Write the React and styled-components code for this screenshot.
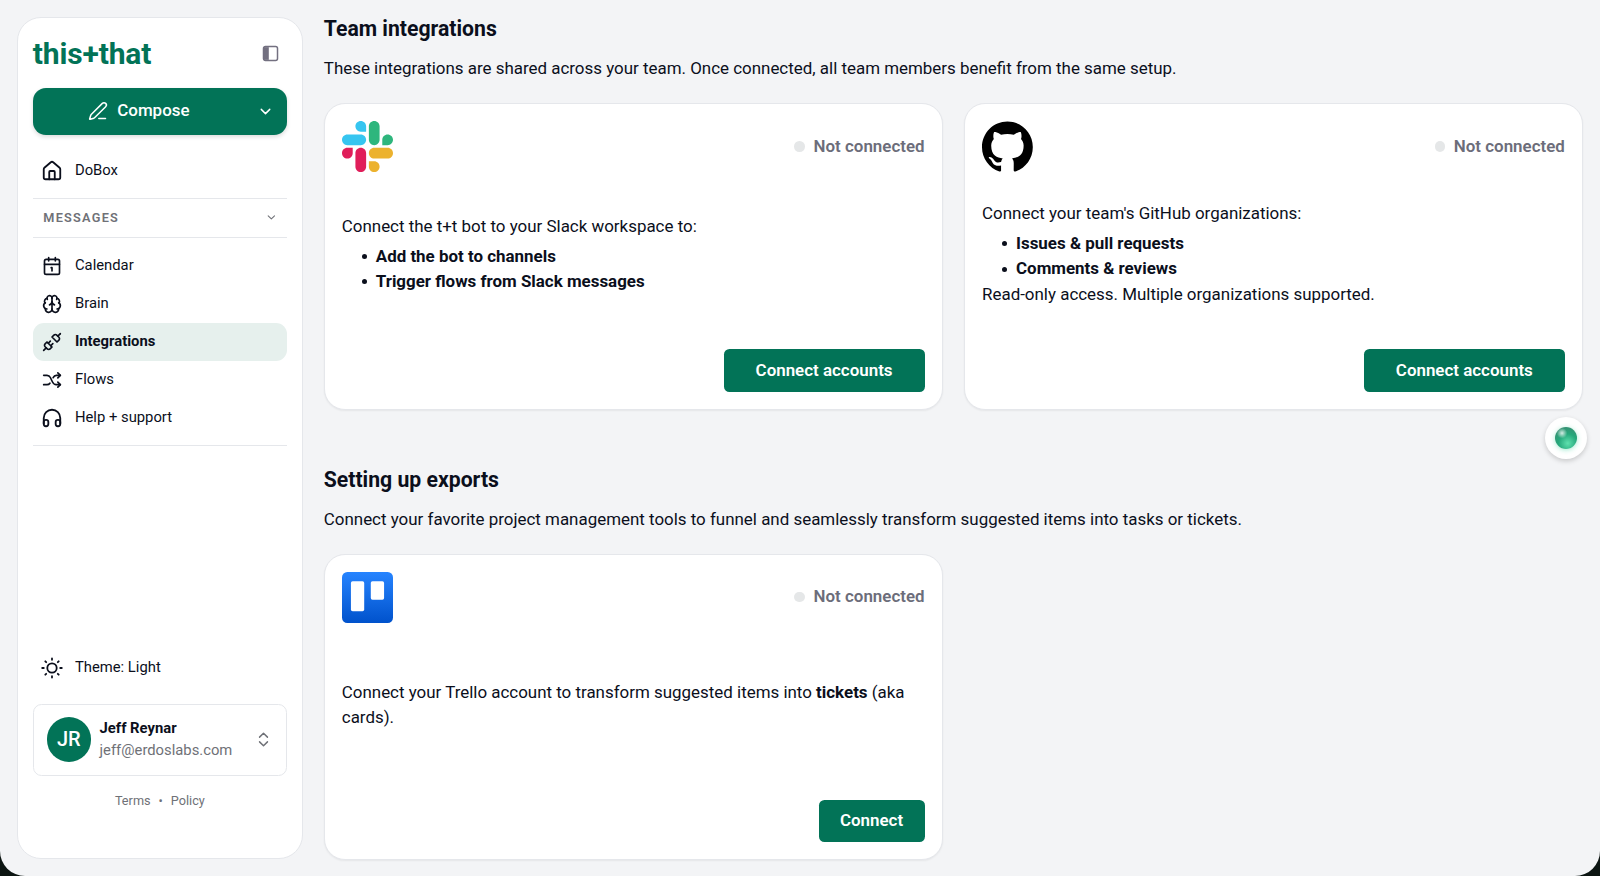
import React from "react";
import styled, { createGlobalStyle } from "styled-components";
import {
  Brain,
  Calendar1,
  ChevronDown,
  ChevronsUpDown,
  House,
  PenLine,
  Unplug
} from "lucide-react";

const GlobalStyle = createGlobalStyle`
  * {
    box-sizing: border-box;
  }
  body {
    margin: 0;
    background: #0c1512;
    color: #0b0f1c;
    font-family: Roboto, "Liberation Sans", sans-serif;
    font-size: 16.93px;
    line-height: 25.4px;
  }
  button {
    border: none;
    padding: 0;
    color: inherit;
    font: inherit;
    cursor: pointer;
  }
`;

const Shell = styled.div`
  position: relative;
  display: flex;
  gap: 20.8px;
  height: 876px;
  padding: 17px 17.2px 17.5px 17.4px;
  overflow: hidden;
  background: #f3f4f6;
  border-radius: 0 0 25px 25px;
`;

const Sidebar = styled.aside`
  display: flex;
  flex-direction: column;
  flex-shrink: 0;
  width: 285.6px;
  padding: 15px 15px 15px 14.4px;
  background: #fff;
  border: 1px solid #e5e7eb;
  border-radius: 24px;
`;

const Brand = styled.header`
  display: flex;
  align-items: center;
  justify-content: space-between;
  height: 41px;
  padding-right: 8px;
`;

const Wordmark = styled.span`
  color: #027357;
  font-size: 30px;
  font-weight: 700;
  letter-spacing: -0.15px;
`;

const ComposeButton = styled.button`
  display: flex;
  align-items: center;
  height: 47px;
  margin-top: 13.5px;
  background: #027357;
  border-radius: 13px;
  box-shadow: 0 2px 4px rgba(0, 0, 0, 0.14);
  color: #fff;
  font-weight: 500;
`;

const ComposeLabel = styled.span`
  display: flex;
  flex: 1;
  align-items: center;
  justify-content: center;
  gap: 9px;
`;

const ComposeMore = styled.span`
  display: flex;
  align-items: center;
  width: 42px;
  padding-left: 12px;
`;

const Nav = styled.nav`
  display: flex;
  flex-direction: column;
  padding: ${props => props.$padding || "0"};
  border-bottom: 1px solid #e5e7eb;
`;

const NavItem = styled.a`
  display: flex;
  align-items: center;
  gap: 11px;
  height: 38.1px;
  padding-left: 7.2px;
  background: ${props => (props.$active ? "#e6f0ed" : "transparent")};
  border-radius: 11px;
  font-size: 14.8px;
  font-weight: ${props => (props.$active ? 700 : 400)};
`;

const IconSlot = styled.span`
  display: flex;
  align-items: center;
  justify-content: center;
  width: 24px;
  height: 24px;
`;

const Group = styled.div`
  display: flex;
  align-items: center;
  justify-content: space-between;
  height: 39px;
  padding: 0 9px 0 10.5px;
  border-bottom: 1px solid #e5e7eb;
  color: #6f7177;
  font-size: 12.7px;
  font-weight: 600;
  letter-spacing: 1.27px;
`;

const Footer = styled.footer`
  display: flex;
  flex-direction: column;
  margin-top: auto;
  padding-bottom: 29px;
`;

const Account = styled.button`
  display: flex;
  align-items: center;
  gap: 8.5px;
  height: 72px;
  margin-top: 17px;
  padding: 0 13px 0 12.8px;
  background: #fff;
  border: 1px solid #e5e7eb;
  border-radius: 8.5px;
  text-align: left;
  svg {
    margin-left: auto;
    color: #6f7177;
  }
`;

const Avatar = styled.span`
  display: flex;
  align-items: center;
  justify-content: center;
  width: 44.5px;
  height: 44.5px;
  background: #027357;
  border-radius: 50%;
  color: #fff;
  font-size: 20px;
  font-weight: 500;
`;

const Person = styled.span`
  display: flex;
  flex-direction: column;
  font-size: 14.8px;
  line-height: 21.2px;
`;

const Name = styled.span`
  font-weight: 700;
`;

const Email = styled.span`
  color: #6f7177;
`;

const Legal = styled.div`
  display: flex;
  justify-content: center;
  gap: 8px;
  margin-top: 12.5px;
  color: #6f7177;
  font-size: 12.7px;
`;

const Main = styled.main`
  flex: 1;
  min-width: 0;
  margin-top: -3px;
`;

const Section = styled.section`
  height: 450.6px;
`;

const Title = styled.h2`
  margin: 0;
  font-size: 21.2px;
  font-weight: 700;
  line-height: 29.6px;
`;

const Lead = styled.p`
  margin: 12.9px 0 21.2px;
`;

const Cards = styled.div`
  display: grid;
  grid-template-columns: repeat(2, 1fr);
  gap: 21.5px;
`;

const Card = styled.article`
  display: flex;
  flex-direction: column;
  height: 306.5px;
  padding: 17px;
  background: #fff;
  border: 1px solid #e5e7eb;
  border-radius: 21px;
  box-shadow: 0 1px 2px rgba(0, 0, 0, 0.06);
`;

const CardHeader = styled.header`
  display: flex;
  align-items: center;
  justify-content: space-between;
  svg {
    width: 51px;
    height: 51px;
  }
`;

const Status = styled.span`
  display: flex;
  align-items: center;
  gap: 8.5px;
  color: #6c6d7a;
  font-weight: 600;
  &::before {
    width: 10.6px;
    height: 10.6px;
    background: #e5e7e8;
    border-radius: 50%;
    content: "";
  }
`;

const CardBody = styled.div`
  display: flex;
  flex: 1;
  flex-direction: column;
  justify-content: center;
  padding-bottom: 12.7px;
  p {
    margin: 0;
  }
`;

const Features = styled.ul`
  margin: 4.2px 0 0;
  padding-left: 19.8px;
  font-weight: 700;
  list-style: none;
`;

const Feature = styled.li`
  display: flex;
  align-items: center;
  gap: 9px;
  &::before {
    width: 5.2px;
    height: 5.2px;
    background: currentColor;
    border-radius: 50%;
    content: "";
  }
`;

const ConnectButton = styled.button`
  align-self: flex-end;
  width: ${props => (props.$wide ? "201px" : "106px")};
  height: 42.3px;
  background: #027357;
  border-radius: 5.5px;
  color: #fff;
  font-weight: 600;
`;

const Orb = styled.button`
  position: absolute;
  top: 417px;
  right: 13px;
  display: flex;
  align-items: center;
  justify-content: center;
  width: 42px;
  height: 42px;
  background: #fff;
  border-radius: 50%;
  box-shadow: 0 2px 5px rgba(0, 0, 0, 0.18);
  &::before {
    width: 22px;
    height: 22px;
    background:
      radial-gradient(circle at 32% 28%, rgba(255, 255, 255, 0.8) 0, rgba(255, 255, 255, 0) 24%),
      radial-gradient(circle at 58% 74%, #5fe0ae 0, #25a87b 45%, #3a8a70 90%);
    border-radius: 50%;
    box-shadow: 0 1px 5px rgba(52, 211, 153, 0.45);
    content: "";
  }
`;

const PanelIcon = () => (
  <svg width="17" height="17" viewBox="0 0 16 16" fill="none">
    <rect x="1.4" y="1.4" width="13.2" height="13.2" rx="1.8" stroke="#737080" strokeWidth="1.4" />
    <path d="M1.6 2h4.8v12H1.6z" fill="#737080" />
  </svg>
);

const FlowsIcon = () => (
  <svg width="20" height="20" viewBox="0 0 24 24" fill="none" stroke="currentColor" strokeWidth="2" strokeLinecap="round" strokeLinejoin="round">
    <path d="M2 6.4h4c2 0 3.2.9 4 2.6l2.6 5.4c1 2.1 2.4 3.2 4.4 3.2h5" />
    <path d="m19 3.4 3 3-3 3M19 14.6l3 3-3 3" />
    <path d="M2 17.6h4c1.6 0 2.7-.6 3.5-1.8M13.4 9.2c.9-1.9 2-2.8 3.8-2.8H22" />
  </svg>
);

const SupportIcon = () => (
  <svg width="22" height="22" viewBox="0 0 24 24" fill="none" stroke="currentColor" strokeWidth="2" strokeLinecap="round" strokeLinejoin="round">
    <path d="M3 18v-6a9 9 0 0 1 18 0v6" />
    <rect x="3" y="14" width="5" height="7" rx="2.4" />
    <rect x="16" y="14" width="5" height="7" rx="2.4" />
  </svg>
);

const SunIcon = () => (
  <svg width="24" height="24" viewBox="0 0 24 24" fill="none" stroke="currentColor" strokeWidth="1.8" strokeLinecap="round">
    <circle cx="12" cy="12" r="4.7" />
    <path d="M12 2.4v1.4M12 20.2v1.4M2.2 12h1.6M20.2 12h1.6M5.3 5.3l.9.9M17.8 17.8l.9.9M5.3 18.7l.9-.9M17.8 6.2l.9-.9" />
  </svg>
);

const SlackLogo = () => (
  <svg viewBox="0 0 122.8 122.8">
    <path fill="#e01e5a" d="M25.8 77.6c0 7.1-5.8 12.9-12.9 12.9S0 84.7 0 77.6s5.8-12.9 12.9-12.9h12.9v12.9zm6.5 0c0-7.1 5.8-12.9 12.9-12.9s12.9 5.8 12.9 12.9v32.3c0 7.1-5.8 12.9-12.9 12.9s-12.9-5.8-12.9-12.9V77.6z" />
    <path fill="#36c5f0" d="M45.2 25.8c-7.1 0-12.9-5.8-12.9-12.9S38.1 0 45.2 0s12.9 5.8 12.9 12.9v12.9H45.2zm0 6.5c7.1 0 12.9 5.8 12.9 12.9s-5.8 12.9-12.9 12.9H12.9C5.8 58.1 0 52.3 0 45.2s5.8-12.9 12.9-12.9h32.3z" />
    <path fill="#2eb67d" d="M97 45.2c0-7.1 5.8-12.9 12.9-12.9s12.9 5.8 12.9 12.9-5.8 12.9-12.9 12.9H97V45.2zm-6.5 0c0 7.1-5.8 12.9-12.9 12.9s-12.9-5.8-12.9-12.9V12.9C64.7 5.8 70.5 0 77.6 0s12.9 5.8 12.9 12.9v32.3z" />
    <path fill="#ecb22e" d="M77.6 97c7.1 0 12.9 5.8 12.9 12.9s-5.8 12.9-12.9 12.9-12.9-5.8-12.9-12.9V97h12.9zm0-6.5c-7.1 0-12.9-5.8-12.9-12.9s5.8-12.9 12.9-12.9h32.3c7.1 0 12.9 5.8 12.9 12.9s-5.8 12.9-12.9 12.9H77.6z" />
  </svg>
);

const GithubLogo = () => (
  <svg viewBox="0 0 98 96">
    <path fill="#000" fillRule="evenodd" clipRule="evenodd" d="M48.854 0C21.839 0 0 22 0 49.217c0 21.756 13.993 40.172 33.405 46.69 2.427.49 3.316-1.059 3.316-2.362 0-1.141-.08-5.052-.08-9.127-13.59 2.934-16.42-5.867-16.42-5.867-2.184-5.704-5.42-7.17-5.42-7.17-4.448-3.015.324-3.015.324-3.015 4.934.326 7.523 5.052 7.523 5.052 4.367 7.496 11.404 5.378 14.235 4.074.404-3.178 1.699-5.378 3.074-6.6-10.839-1.141-22.243-5.378-22.243-24.283 0-5.378 1.94-9.778 5.014-13.2-.485-1.222-2.184-6.275.486-13.038 0 0 4.125-1.304 13.426 5.052a46.97 46.97 0 0 1 12.214-1.63c4.125 0 8.33.571 12.213 1.63 9.302-6.356 13.427-5.052 13.427-5.052 2.67 6.763.97 11.816.485 13.038 3.155 3.422 5.015 7.822 5.015 13.2 0 18.905-11.404 23.06-22.324 24.283 1.78 1.548 3.316 4.481 3.316 9.126 0 6.6-.08 11.897-.08 13.526 0 1.304.89 2.853 3.316 2.364 19.412-6.52 33.405-24.935 33.405-46.691C97.707 22 75.788 0 48.854 0z" />
  </svg>
);

const TrelloLogo = () => (
  <svg viewBox="0 0 48 48">
    <defs>
      <linearGradient id="trello" x1="0" y1="0" x2="0" y2="1">
        <stop offset="0" stopColor="#2684ff" />
        <stop offset="1" stopColor="#0052cc" />
      </linearGradient>
    </defs>
    <rect width="48" height="48" rx="5" fill="url(#trello)" />
    <rect x="8.4" y="8.8" width="12.5" height="28.2" rx="1.6" fill="#fff" />
    <rect x="27.1" y="8.8" width="12.5" height="17.2" rx="1.6" fill="#fff" />
  </svg>
);

const links = [
  { label: "Calendar", icon: <Calendar1 size={20} /> },
  { label: "Brain", icon: <Brain size={20} /> },
  { label: "Integrations", icon: <Unplug size={20} />, active: true },
  { label: "Flows", icon: <FlowsIcon /> },
  { label: "Help + support", icon: <SupportIcon /> }
];

const IntegrationCard = ({ Logo, action, wide, children }) => (
  <Card>
    <CardHeader>
      <Logo />
      <Status>Not connected</Status>
    </CardHeader>
    <CardBody>{children}</CardBody>
    <ConnectButton $wide={wide}>{action}</ConnectButton>
  </Card>
);

export default () => (
  <>
    <GlobalStyle />
    <Shell>
      <Sidebar>
        <Brand>
          <Wordmark>this+that</Wordmark>
          <PanelIcon />
        </Brand>
        <ComposeButton>
          <ComposeLabel>
            <PenLine size={20} strokeWidth={1.8} />
            Compose
          </ComposeLabel>
          <ComposeMore>
            <ChevronDown size={17} />
          </ComposeMore>
        </ComposeButton>
        <Nav $padding="17px 0 8px">
          <NavItem>
            <IconSlot>
              <House size={22} />
            </IconSlot>
            DoBox
          </NavItem>
        </Nav>
        <Group>
          MESSAGES
          <ChevronDown size={12.7} />
        </Group>
        <Nav $padding="9.1px 0 7.9px">
          {links.map(({ label, icon, active }) => (
            <NavItem key={label} $active={active}>
              <IconSlot>{icon}</IconSlot>
              {label}
            </NavItem>
          ))}
        </Nav>
        <Footer>
          <NavItem>
            <IconSlot>
              <SunIcon />
            </IconSlot>
            Theme: Light
          </NavItem>
          <Account>
            <Avatar>JR</Avatar>
            <Person>
              <Name>Jeff Reynar</Name>
              <Email>jeff@erdoslabs.com</Email>
            </Person>
            <ChevronsUpDown size={19} strokeWidth={1.8} />
          </Account>
          <Legal>
            <span>Terms</span>
            <span>•</span>
            <span>Policy</span>
          </Legal>
        </Footer>
      </Sidebar>
      <Main>
        <Section>
          <Title>Team integrations</Title>
          <Lead>
            These integrations are shared across your team. Once connected, all team members benefit from the same setup.
          </Lead>
          <Cards>
            <IntegrationCard Logo={SlackLogo} action="Connect accounts" wide>
              <p>Connect the t+t bot to your Slack workspace to:</p>
              <Features>
                <Feature>Add the bot to channels</Feature>
                <Feature>Trigger flows from Slack messages</Feature>
              </Features>
            </IntegrationCard>
            <IntegrationCard Logo={GithubLogo} action="Connect accounts" wide>
              <p>Connect your team's GitHub organizations:</p>
              <Features>
                <Feature>Issues &amp; pull requests</Feature>
                <Feature>Comments &amp; reviews</Feature>
              </Features>
              <p>Read-only access. Multiple organizations supported.</p>
            </IntegrationCard>
          </Cards>
        </Section>
        <Section>
          <Title>Setting up exports</Title>
          <Lead>
            Connect your favorite project management tools to funnel and seamlessly transform suggested items into tasks or tickets.
          </Lead>
          <Cards>
            <IntegrationCard Logo={TrelloLogo} action="Connect">
              <p>
                Connect your Trello account to transform suggested items into <b>tickets</b> (aka cards).
              </p>
            </IntegrationCard>
          </Cards>
        </Section>
      </Main>
      <Orb />
    </Shell>
  </>
);
